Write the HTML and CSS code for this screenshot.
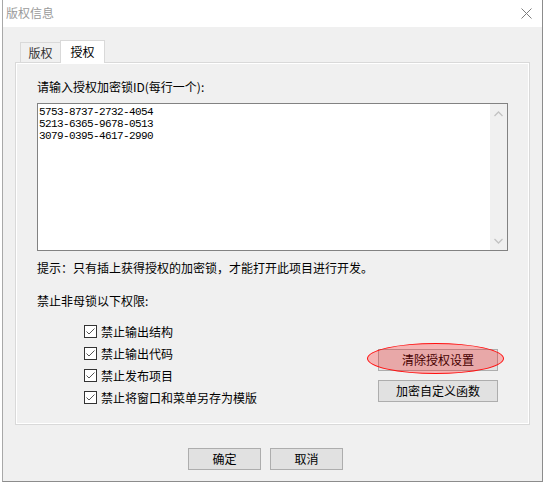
FILE: index.html
```html
<!DOCTYPE html>
<html lang="zh-CN">
<head>
<meta charset="utf-8">
<title>版权信息</title>
<link rel="stylesheet" href="styles.css">
</head>
<body>
<div class="window">
  <div class="titlebar">
    <span class="title">版权信息</span>
    <svg class="close" width="11" height="11" viewBox="0 0 11 11"><path d="M0.5 0.5 L10.5 10.5 M10.5 0.5 L0.5 10.5" stroke="#7d7d7d" stroke-width="1" fill="none"/></svg>
  </div>
  <div class="client">
    <div class="tabs">
      <div class="tab">版权</div>
      <div class="tab active">授权</div>
    </div>
    <div class="panel">
      <div class="label first">请输入授权加密锁ID(每行一个):</div>
      <div class="textbox">
        <div class="lines">
          <div>5753-8737-2732-4054</div>
          <div>5213-6365-9678-0513</div>
          <div>3079-0395-4617-2990</div>
        </div>
        <div class="scrollbar">
          <svg width="9" height="6" viewBox="0 0 9 6"><path d="M0.5 5 L4.5 1 L8.5 5" stroke="#c3c3c3" stroke-width="1.3" fill="none"/></svg>
          <svg width="9" height="6" viewBox="0 0 9 6"><path d="M0.5 1 L4.5 5 L8.5 1" stroke="#c3c3c3" stroke-width="1.3" fill="none"/></svg>
        </div>
      </div>
      <div class="label hint">提示：只有插上获得授权的加密锁，才能打开此项目进行开发。</div>
      <div class="label perm">禁止非母锁以下权限:</div>
      <div class="options">
        <div class="checks">
          <div class="check"><svg class="box" width="13" height="13" viewBox="0 0 13 13"><rect x="0.5" y="0.5" width="12" height="12" fill="#fff" stroke="#333"/><path d="M2.5 6.5 L5 9 L10.5 3.5" stroke="#555" stroke-width="1" fill="none"/></svg><span>禁止输出结构</span></div>
          <div class="check"><svg class="box" width="13" height="13" viewBox="0 0 13 13"><rect x="0.5" y="0.5" width="12" height="12" fill="#fff" stroke="#333"/><path d="M2.5 6.5 L5 9 L10.5 3.5" stroke="#555" stroke-width="1" fill="none"/></svg><span>禁止输出代码</span></div>
          <div class="check"><svg class="box" width="13" height="13" viewBox="0 0 13 13"><rect x="0.5" y="0.5" width="12" height="12" fill="#fff" stroke="#333"/><path d="M2.5 6.5 L5 9 L10.5 3.5" stroke="#555" stroke-width="1" fill="none"/></svg><span>禁止发布项目</span></div>
          <div class="check"><svg class="box" width="13" height="13" viewBox="0 0 13 13"><rect x="0.5" y="0.5" width="12" height="12" fill="#fff" stroke="#333"/><path d="M2.5 6.5 L5 9 L10.5 3.5" stroke="#555" stroke-width="1" fill="none"/></svg><span>禁止将窗口和菜单另存为模版</span></div>
        </div>
        <div class="side">
          <div class="btn">清除授权设置</div>
          <div class="btn">加密自定义函数</div>
          <div class="mark"></div>
        </div>
      </div>
    </div>
    <div class="footer">
      <div class="btn small">确定</div>
      <div class="btn small">取消</div>
    </div>
  </div>
</div>
</body>
</html>
```

FILE: styles.css
```css
* { box-sizing: border-box; }
html, body { margin: 0; padding: 0; }
body {
  background: #ffffff;
  font-family: "Noto Sans CJK SC", "Noto Sans", sans-serif;
  font-size: 12px;
  color: #000;
  width: 545px;
  height: 484px;
  overflow: hidden;
}
.window {
  margin-left: 2px;
  width: 541px;
  height: 482px;
  border-left: 1px solid #a8a8a8;
  border-right: 1px solid #8c8c8c;
  border-bottom: 1px solid #8c8c8c;
  display: flex;
  flex-direction: column;
  background: #f0f0f0;
}
.titlebar {
  height: 27px;
  background: #ffffff;
  display: flex;
  align-items: center;
  justify-content: space-between;
  padding: 0 10px 1px 3px;
}
.title {
  color: #9a9a9a;
  font-size: 12px;
  line-height: 16px;
}
.close { display: block; margin-top: 1px; }
.client {
  flex: 1;
  padding: 13px 12px 0 12px;
}
.tabs {
  display: flex;
  align-items: flex-end;
  height: 22px;
  padding-left: 5px;
  position: relative;
  z-index: 1;
}
.tab {
  width: 40px;
  height: 20px;
  border: 1px solid #d9d9d9;
  border-bottom: none;
  border-right: none;
  background: #f0f0f0;
  color: #333;
  display: flex;
  align-items: center;
  justify-content: center;
  line-height: 16px;
}
.tab.active {
  width: 45px;
  height: 23px;
  margin-bottom: -1px;
  background: #ffffff;
  color: #000;
  border-right: 1px solid #d9d9d9;
  padding-bottom: 1px;
}
.panel {
  height: 363px;
  border: 1px solid #d9d9d9;
  box-shadow: inset 0 0 0 1px #ffffff;
  background: #f0f0f0;
  padding: 16px 21px 0 21px;
}
.label { line-height: 16px; white-space: nowrap; }
.textbox {
  margin-top: 8px;
  height: 148px;
  border: 1px solid #828282;
  background: #ffffff;
  display: flex;
}
.lines {
  flex: 1;
  padding: 2px 0 0 1px;
  font-family: "Liberation Mono", monospace;
  font-size: 11px;
  letter-spacing: -0.6px;
  line-height: 12px;
  color: #000;
}
.scrollbar {
  width: 17px;
  background: #f0f0f0;
  display: flex;
  flex-direction: column;
  justify-content: space-between;
  align-items: center;
  padding: 7px 0 6px 0;
}
.scrollbar svg { display: block; }
.hint { margin-top: 9px; }
.perm { margin-top: 17px; }
.options {
  margin-top: 11px;
  display: flex;
  justify-content: space-between;
}
.checks { padding-left: 47px; }
.check {
  height: 22px;
  display: flex;
  align-items: center;
  gap: 4px;
}
.box { display: block; flex: none; }
.side {
  position: relative;
  margin-top: 29px;
  margin-right: 10px;
  display: flex;
  flex-direction: column;
  gap: 9px;
}
.btn {
  width: 120px;
  height: 22px;
  border: 1px solid #adadad;
  background: #e1e1e1;
  display: flex;
  align-items: center;
  justify-content: center;
  line-height: 16px;
}
.mark {
  position: absolute;
  left: -11px;
  top: -6px;
  width: 137px;
  height: 31px;
  border: 1.5px solid #ff1010;
  border-radius: 50%;
  background: rgba(255, 0, 0, 0.25);
}
.footer {
  margin-top: 23px;
  padding-left: 173px;
  display: flex;
  gap: 9px;
}
.btn.small { width: 73px; }
```
